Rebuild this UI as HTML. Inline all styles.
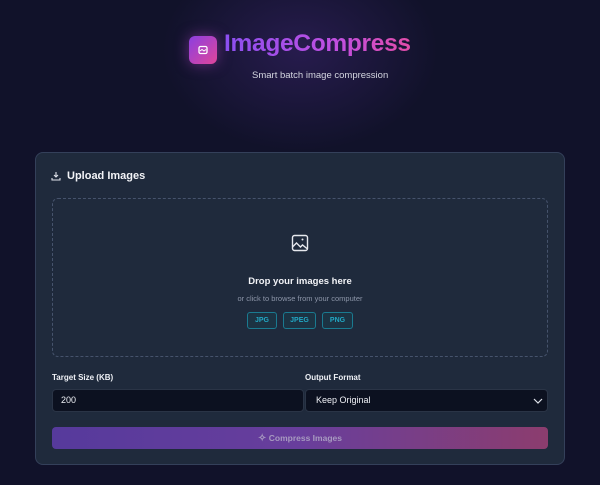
<!DOCTYPE html>
<html><head><style>
*{margin:0;padding:0;box-sizing:border-box}
body{width:600px;height:485px;overflow:hidden;background:#11122a;font-family:"Liberation Sans",sans-serif;position:relative;color:#fff}
.glow{position:absolute;left:150px;top:-60px;width:300px;height:220px;background:radial-gradient(ellipse at center,rgba(90,50,160,.3),rgba(16,17,31,0) 65%)}
.logo{position:absolute;left:189px;top:36px;width:28px;height:28px;border-radius:6px;background:linear-gradient(135deg,#8b3fe0,#e0469a);box-shadow:0 0 14px rgba(180,70,200,.5)}
.title{position:absolute;left:224px;top:30px;font-size:24.5px;font-weight:bold;letter-spacing:-0.3px;background:linear-gradient(90deg,#8b4ff0,#c04fe0 60%,#e24ca8);-webkit-background-clip:text;color:transparent}
.sub{position:absolute;left:252px;top:70px;font-size:9.5px;color:#d4d6e0}
.card{position:absolute;left:35px;top:152px;width:530px;height:313px;background:#1f2a3c;border:1px solid #34405a;border-radius:8px}
.h{position:absolute;left:67px;top:170px;font-size:11px;font-weight:bold;color:#f2f3f7}
.drop{position:absolute;left:52px;top:198px;width:496px;height:159px;border:1px dashed #46536c;border-radius:6px}
.c{position:absolute;left:0;width:600px;text-align:center}
.tag{position:absolute;top:312px;height:17px;border:1px solid #1a7a90;border-radius:3px;background:#1c3343;color:#22a7c4;font-size:7px;font-weight:bold;text-align:center;line-height:15px}
.lab{position:absolute;top:373px;font-size:8px;font-weight:bold;color:#eef0f5}
.in{position:absolute;top:389px;height:23px;background:#0c1120;border:1px solid #2a3446;border-radius:4px;font-size:9px;color:#eef0f5;line-height:21px;padding-left:8px}
.btn{position:absolute;left:52px;top:427px;width:496px;height:22px;border-radius:4px;background:linear-gradient(90deg,#563a9c,#683e9c 50%,#8c3d6e);color:#a79ac0;font-size:8.5px;font-weight:bold;text-align:center;line-height:22px}
</style></head><body>
<div class="glow"></div>
<div class="logo"><svg width="28" height="28" viewBox="0 0 28 28"><rect x="10" y="10.5" width="8" height="7" rx="1.5" fill="none" stroke="#fff" stroke-width="1.3"/><path d="M11 15l2-1.5 2 1.5 2-1.5" stroke="#fff" stroke-width="1" fill="none"/></svg></div>
<div class="title">ImageCompress</div>
<div class="sub">Smart batch image compression</div>
<div class="card"></div>
<svg style="position:absolute;left:51px;top:171px" width="10" height="10" viewBox="0 0 10 10"><path d="M5 1v5M3 4l2 2 2-2M1 7v2h8V7" stroke="#dfe2ea" stroke-width="1.1" fill="none"/></svg>
<div class="h">Upload Images</div>
<div class="drop"></div>
<svg style="position:absolute;left:291px;top:234px" width="18" height="18" viewBox="0 0 18 18"><rect x="1.5" y="1.5" width="15" height="15" rx="2" fill="none" stroke="#e6e8ee" stroke-width="1.4"/><circle cx="11.5" cy="5.5" r="1" fill="#e6e8ee"/><path d="M1.5 13l4-4 4 4 2-2 5 4" stroke="#e6e8ee" stroke-width="1.4" fill="none"/></svg>
<div class="c" style="top:276px;font-size:9.5px;font-weight:bold;color:#f2f3f7">Drop your images here</div>
<div class="c" style="top:294px;font-size:7.5px;color:#8c95a8">or click to browse from your computer</div>
<div class="tag" style="left:247px;width:30px">JPG</div>
<div class="tag" style="left:283px;width:33px">JPEG</div>
<div class="tag" style="left:322px;width:31px">PNG</div>
<div class="lab" style="left:52px">Target Size (KB)</div>
<div class="lab" style="left:305px">Output Format</div>
<div class="in" style="left:52px;width:252px">200</div>
<div class="in" style="left:305px;width:243px;padding-left:10px">Keep Original<svg style="position:absolute;right:4px;top:7px" width="10" height="8" viewBox="0 0 10 8"><path d="M1 2l4 4 4-4" stroke="#dfe2ea" stroke-width="1.2" fill="none"/></svg></div>
<div class="btn"><span style="font-size:10px">✧</span> Compress Images</div>
</body></html>
